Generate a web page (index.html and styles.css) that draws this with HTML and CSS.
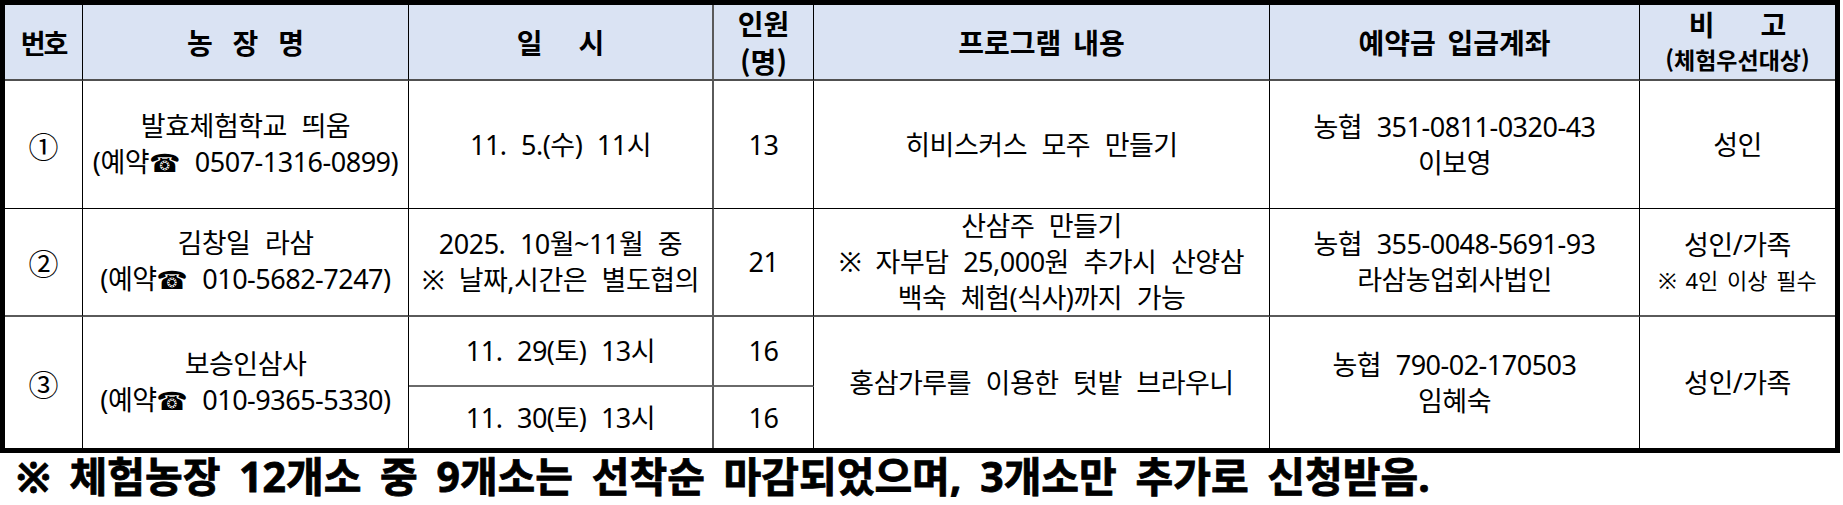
FILE: index.html
```html
<!DOCTYPE html>
<html lang="ko">
<head>
<meta charset="utf-8">
<title>체험농장 프로그램 안내</title>
<link rel="stylesheet" href="styles.css">
</head>
<body>
<main class="sheet">
  <div class="grid">
    <div class="cell head num"><span class="t">번호</span></div>
    <div class="cell head farm"><span class="t">농 장 명</span></div>
    <div class="cell head date col-when"><span class="t">일 시</span></div>
    <div class="cell head two"><span class="t">인원<br>(명)</span></div>
    <div class="cell head"><span class="t">프로그램 내용</span></div>
    <div class="cell head"><span class="t">예약금 입금계좌</span></div>
    <div class="cell head last"><span class="t"><span class="bigo">비 고</span><span class="sub">(체험우선대상)</span></span></div>

    <div class="cell circ"><span class="t">①</span></div>
    <div class="cell"><span class="t">발효체험학교 띄움<br>(예약<span class="tel">☎</span> 0507-1316-0899)</span></div>
    <div class="cell col-when"><span class="t">11. 5.(수) 11시</span></div>
    <div class="cell"><span class="t">13</span></div>
    <div class="cell"><span class="t">히비스커스 모주 만들기</span></div>
    <div class="cell"><span class="t">농협 351-0811-0320-43<br>이보영</span></div>
    <div class="cell last"><span class="t">성인</span></div>

    <div class="cell circ row-sep"><span class="t">②</span></div>
    <div class="cell row-sep"><span class="t">김창일 라삼<br>(예약<span class="tel">☎</span> 010-5682-7247)</span></div>
    <div class="cell col-when row-sep"><span class="t">2025. 10월~11월 중<br>※ 날짜,시간은 별도협의</span></div>
    <div class="cell row-sep"><span class="t">21</span></div>
    <div class="cell row-sep"><span class="t">산삼주 만들기<br>※ 자부담 25,000원 추가시 산양삼<br>백숙 체험(식사)까지 가능</span></div>
    <div class="cell row-sep"><span class="t">농협 355-0048-5691-93<br>라삼농업회사법인</span></div>
    <div class="cell last row-sep"><span class="t">성인/가족<span class="small">※ 4인 이상 필수</span></span></div>

    <div class="cell circ span2 bottom"><span class="t">③</span></div>
    <div class="cell span2 bottom"><span class="t">보승인삼사<br>(예약<span class="tel">☎</span> 010-9365-5330)</span></div>
    <div class="cell col-when sub-sep"><span class="t">11. 29(토) 13시</span></div>
    <div class="cell sub-sep"><span class="t">16</span></div>
    <div class="cell span2 bottom"><span class="t">홍삼가루를 이용한 텃밭 브라우니</span></div>
    <div class="cell span2 bottom"><span class="t">농협 790-02-170503<br>임혜숙</span></div>
    <div class="cell last span2 bottom"><span class="t">성인/가족</span></div>
    <div class="cell col-when bottom"><span class="t">11. 30(토) 13시</span></div>
    <div class="cell bottom"><span class="t">16</span></div>
  </div>
  <p class="note">※ 체험농장 12개소 중 9개소는 선착순 마감되었으며, 3개소만 추가로 신청받음.</p>
</main>
</body>
</html>
```

FILE: styles.css
```css
* {
  box-sizing: border-box;
}

html,
body {
  margin: 0;
  padding: 0;
  background: #ffffff;
}

body {
  width: 1843px;
  font-family: "Noto Sans", "Noto Sans CJK KR", sans-serif;
  color: #000000;
}

.grid {
  display: grid;
  width: 1840px;
  border: 5px solid #000000;
  grid-template-columns: 78px 326px 305px 100px 456px 370px 195px;
  grid-template-rows: 76px 128px 108px 70px 61px;
}

.cell {
  display: flex;
  align-items: center;
  justify-content: center;
  text-align: center;
  border-right: 1px solid #000000;
  border-bottom: 1px solid #000000;
  font-size: 27px;
  line-height: 36px;
  letter-spacing: -0.5px;
  word-spacing: 8px;
  white-space: nowrap;
  background: #ffffff;
}

.t {
  display: block;
}

.cell.last {
  border-right: none;
}

.cell.col-when {
  border-right: 2px solid #5a5a5a;
}

.cell.row-sep {
  border-bottom: 2px solid #5a5a5a;
}

.cell.sub-sep {
  border-bottom: 2px solid #6a6a6a;
}

.cell.span2 {
  grid-row: span 2;
}

.cell.bottom {
  border-bottom: none;
}

.head {
  background: #dae3f3;
  font-family: "Noto Sans CJK KR", sans-serif;
  font-weight: 700;
  font-size: 28px;
  line-height: 37px;
  letter-spacing: 0;
  word-spacing: 4px;
  border-bottom: 2px solid #505050;
}

.head.num {
  letter-spacing: -2px;
  font-size: 27px;
}

.head.farm {
  word-spacing: 12px;
}

.head.date {
  word-spacing: 28px;
}

.head.two {
  line-height: 38px;
}

.bigo {
  display: block;
  word-spacing: 38px;
  line-height: 34px;
}

.sub {
  display: block;
  font-size: 23px;
  line-height: 36px;
  word-spacing: 0;
}

.circ {
  font-family: "Noto Sans CJK KR", sans-serif;
  font-size: 30px;
  letter-spacing: 0;
}

.tel {
  font-family: "DejaVu Sans", sans-serif;
  font-size: 25px;
  letter-spacing: 0;
}

.small {
  display: block;
  font-size: 22px;
  line-height: 34px;
  letter-spacing: 0;
  word-spacing: 3px;
}

.note {
  margin: 0;
  padding: 2px 0 0 16px;
  font-family: "Noto Sans", "Noto Sans CJK KR", sans-serif;
  font-weight: 700;
  font-size: 41px;
  line-height: 42px;
  letter-spacing: 0;
  word-spacing: 8px;
  white-space: nowrap;
  -webkit-text-stroke: 0.8px #000000;
}
```
